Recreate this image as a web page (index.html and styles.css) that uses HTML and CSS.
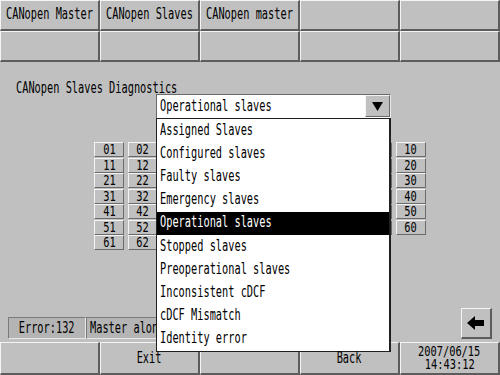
FILE: index.html
```html
<!DOCTYPE html>
<html>
<head>
<meta charset="utf-8">
<link rel="stylesheet" href="styles.css">
</head>
<body>
<div class="screen">
  <div class="tabs">
    <div class="btn left"><span class="t">CANopen Master</span></div>
    <div class="btn left"><span class="t">CANopen Slaves</span></div>
    <div class="btn left"><span class="t">CANopen master</span></div>
    <div class="btn"></div>
    <div class="btn"></div>
    <div class="btn"></div>
    <div class="btn"></div>
    <div class="btn"></div>
    <div class="btn"></div>
    <div class="btn"></div>
  </div>

  <div class="main">
    <div class="title"><span class="t">CANopen Slaves Diagnostics</span></div>

    <div class="grid" id="grid"></div>

    <div class="status">
      <div class="field err"><span class="t c">Error:132</span></div>
      <div class="field msg"><span class="t">Master alone</span></div>
      <div class="spacer"></div>
      <div class="back">
        <svg width="18" height="14" viewBox="0 0 18 14"><polygon points="0,7 8,0 8,4 17,4 17,10 8,10 8,14" fill="#000"/></svg>
      </div>
    </div>

    <div class="combo">
      <div class="combo-head">
        <span class="t">Operational slaves</span>
        <div class="arrow"><svg width="11" height="9" viewBox="0 0 11 9"><polygon points="0,0 11,0 5.5,9" fill="#000"/></svg></div>
      </div>
      <div class="combo-list">
        <div class="item"><span class="t">Assigned Slaves</span></div>
        <div class="item"><span class="t">Configured slaves</span></div>
        <div class="item"><span class="t">Faulty slaves</span></div>
        <div class="item"><span class="t">Emergency slaves</span></div>
        <div class="item sel"><span class="t">Operational slaves</span></div>
        <div class="item"><span class="t">Stopped slaves</span></div>
        <div class="item"><span class="t">Preoperational slaves</span></div>
        <div class="item"><span class="t">Inconsistent cDCF</span></div>
        <div class="item"><span class="t">cDCF Mismatch</span></div>
        <div class="item"><span class="t">Identity error</span></div>
      </div>
    </div>
  </div>

  <div class="bottom">
    <div class="btn"></div>
    <div class="btn center"><span class="t c">Exit</span></div>
    <div class="btn"></div>
    <div class="btn center"><span class="t c">Back</span></div>
    <div class="btn center date"><span class="t c">2007/06/15</span><span class="t c">14:43:12</span></div>
  </div>
</div>
<script>
  var g = document.getElementById('grid');
  for (var i = 1; i <= 64; i++) {
    var d = document.createElement('div');
    d.className = 'num';
    var s = document.createElement('span');
    s.className = 't c';
    s.textContent = (i < 10 ? '0' : '') + i;
    d.appendChild(s);
    g.appendChild(d);
  }
</script>
</body>
</html>
```

FILE: styles.css
```css
* { box-sizing: border-box; }
html, body { margin: 0; padding: 0; }
body {
  width: 500px;
  height: 375px;
  overflow: hidden;
  background: #c0c0c0;
  font-family: "DejaVu Sans Mono", "Liberation Mono", monospace;
  font-size: 15px;
  line-height: 15px;
  color: #000;
}
.screen {
  width: 500px;
  height: 375px;
  display: flex;
  flex-direction: column;
}
.t {
  display: inline-block;
  white-space: nowrap;
  transform: scaleX(0.687);
  transform-origin: left center;
}
.t.c { transform-origin: center center; }

.btn {
  background: #c0c0c0;
  border-top: 1px solid #f4f4f4;
  border-left: 1px solid #f4f4f4;
  border-right: 2px solid #5c5c5c;
  border-bottom: 2px solid #5c5c5c;
  display: flex;
  align-items: center;
}
.btn.left { padding-left: 5px; }
.btn.center { justify-content: center; }

.tabs {
  display: grid;
  grid-template-columns: repeat(5, 100px);
  grid-template-rows: 31px 31px;
  height: 62px;
}
.tabs .btn .t { margin-top: -1px; }

.main {
  position: relative;
  height: 280px;
  display: flex;
  flex-direction: column;
}
.title {
  padding: 19px 0 0 16px;
  height: 34px;
}
.grid {
  margin: 46px 0 0 94px;
  display: grid;
  grid-template-columns: repeat(10, 30px);
  grid-auto-rows: 15px;
  column-gap: 3.55px;
  row-gap: 0.5px;
  width: 332px;
}
.num {
  background: #c0c0c0;
  border-top: 1px solid #f4f4f4;
  border-left: 1px solid #f4f4f4;
  border-right: 1px solid #6a6a6a;
  border-bottom: 1px solid #6a6a6a;
  display: flex;
  align-items: center;
  justify-content: center;
  font-size: 14px;
  line-height: 13px;
}
.num .t { transform: scaleX(0.74); }

.status {
  margin-top: auto;
  padding: 0 8px 3px 8px;
  display: flex;
  align-items: flex-end;
}
.field {
  height: 22px;
  background: #b4b4b4;
  border-top: 1px solid #7a7a7a;
  border-left: 1px solid #7a7a7a;
  border-right: 1px solid #e8e8e8;
  border-bottom: 1px solid #e8e8e8;
  display: flex;
  align-items: center;
}
.err { width: 78px; justify-content: center; }
.msg { width: 200px; padding-left: 3px; }
.spacer { flex: 1; }
.back {
  width: 31px;
  height: 31px;
  background: #c0c0c0;
  border-top: 1px solid #f4f4f4;
  border-left: 1px solid #f4f4f4;
  border-right: 2px solid #5c5c5c;
  border-bottom: 2px solid #5c5c5c;
  display: flex;
  align-items: center;
  justify-content: center;
}

.combo {
  position: absolute;
  left: 156px;
  top: 32px;
  width: 235px;
}
.combo-head {
  height: 24px;
  background: #fff;
  border-top: 1px solid #6a6a6a;
  border-left: 1px solid #6a6a6a;
  border-right: 1px solid #e8e8e8;
  display: flex;
  align-items: center;
  padding-left: 3px;
}
.combo-head .t { flex: 1; }
.arrow {
  width: 25px;
  height: 22px;
  margin-top: -1px;
  background: #c0c0c0;
  border-top: 1px solid #f4f4f4;
  border-left: 1px solid #f4f4f4;
  border-right: 1px solid #6a6a6a;
  border-bottom: 1px solid #6a6a6a;
  display: flex;
  align-items: center;
  justify-content: center;
}
.combo-list {
  background: #fff;
  border: 1px solid #202020;
  border-right-width: 2px;
  height: 234px;
  display: flex;
  flex-direction: column;
}
.item {
  flex: 1;
  display: flex;
  align-items: center;
  padding-left: 3px;
  padding-bottom: 1px;
}
.item.sel { background: #000; color: #fff; }

.bottom {
  display: grid;
  grid-template-columns: repeat(5, 100px);
  height: 33px;
}
.date {
  flex-direction: column;
  justify-content: center;
  font-size: 14px;
}
.date .t { line-height: 13px; transform: scaleX(0.74); }
</style>
```
